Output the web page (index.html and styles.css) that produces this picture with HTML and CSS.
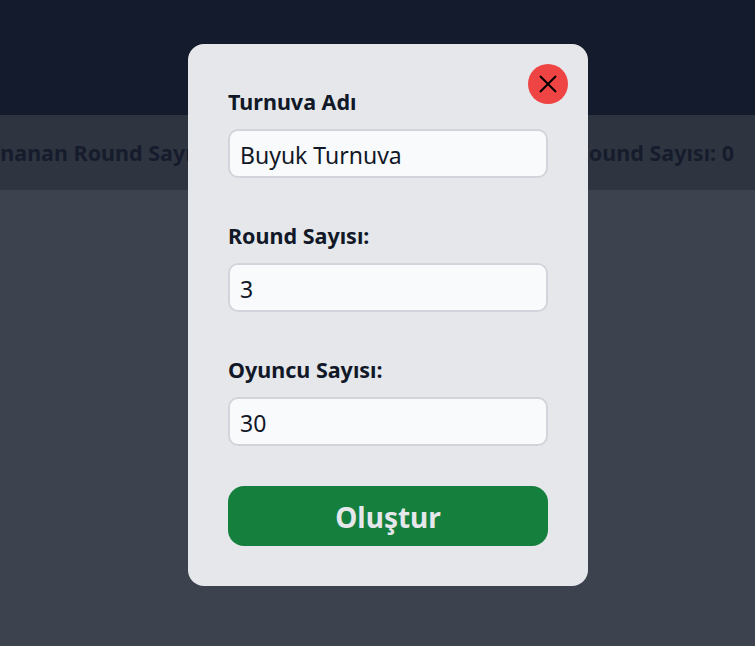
FILE: index.html
```html
<!DOCTYPE html>
<html lang="tr">
<head>
    <meta charset="UTF-8">
    <title>Turnuva</title>
    <link rel="stylesheet" href="styles.css">
</head>
<body>
    <header class="topbar"></header>
    <div class="stats">
        <span class="stat">Oynanan Round Sayısı: 0</span>
        <span class="stat">Kalan Round Sayısı: 0</span>
    </div>

    <!-- Turnuva modal -->
    <div class="overlay">
        <form class="modal">
            <button type="button" class="close" aria-label="Kapat">
                <svg viewBox="0 0 24 24" width="24" height="24" fill="none" stroke="#000" stroke-width="2">
                    <path d="M4 4L20 20M20 4L4 20"/>
                </svg>
            </button>
            <div class="field">
                <label for="name">Turnuva Adı</label>
                <input id="name" type="text" value="Buyuk Turnuva">
            </div>
            <div class="field">
                <label for="rounds">Round Sayısı:</label>
                <input id="rounds" type="text" value="3">
            </div>
            <div class="field">
                <label for="players">Oyuncu Sayısı:</label>
                <input id="players" type="text" value="30">
            </div>
            <button type="button" class="submit">Oluştur</button>
        </form>
    </div>
</body>
</html>
```

FILE: styles.css
```css
* {
    box-sizing: border-box;
}
html, body {
    height: 100%;
}
body {
    margin: 0;
    overflow: hidden;
    font-family: "Noto Sans", "Open Sans", sans-serif;
    background: #3c424e;
    color: #111827;
}
.topbar {
    height: 115px;
    background: #141b2d;
}
.stats {
    height: 75px;
    display: flex;
    justify-content: space-between;
    align-items: center;
    padding: 0 21px 0 0;
    margin-left: -29px;
    background: #2e3541;
    font-size: 21.5px;
    font-weight: 700;
}
.stat {
    color: #161c2c;
    white-space: nowrap;
}
.overlay {
    position: fixed;
    inset: 0;
    padding-left: 21px;
    display: flex;
    justify-content: center;
    align-items: center;
    backdrop-filter: blur(0.6px);
}
.modal {
    position: relative;
    width: 400px;
    height: 542px;
    margin-top: -16px;
    padding: 44px 40px 40px;
    display: flex;
    flex-direction: column;
    background: #e5e7eb;
    border-radius: 16px;
}
.close {
    position: absolute;
    top: 20px;
    right: 20px;
    width: 40px;
    height: 40px;
    padding: 0;
    display: flex;
    justify-content: center;
    align-items: center;
    border: 0;
    border-radius: 50%;
    background: #ef4444;
}
.field {
    display: flex;
    flex-direction: column;
    gap: 13px;
    margin-bottom: 44px;
}
.field:nth-of-type(3) {
    margin-bottom: 40px;
}
.field label {
    font-size: 21.5px;
    line-height: 28px;
    font-weight: 700;
    color: #111827;
}
.field input {
    width: 100%;
    height: 49px;
    padding: 2px 10px 0;
    border: 2px solid #d1d5db;
    border-radius: 10px;
    background: #f9fafb;
    font-family: inherit;
    font-size: 23px;
    color: #111827;
}
.submit {
    height: 60px;
    padding-top: 2px;
    border: 0;
    border-radius: 16px;
    background: #15803d;
    color: #e5e7eb;
    font-family: inherit;
    font-size: 28px;
    font-weight: 700;
}
```
